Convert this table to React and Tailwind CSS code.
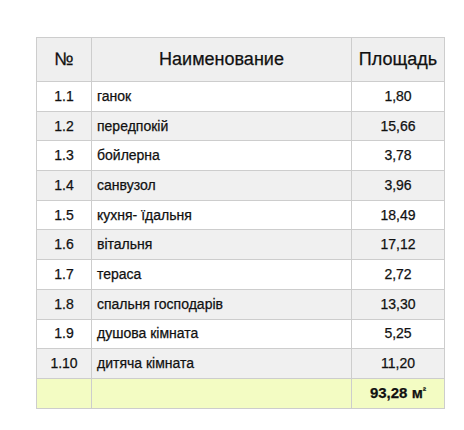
import React from 'react';

const rows = [
  ['1.1', 'ганок', '1,80'],
  ['1.2', 'передпокій', '15,66'],
  ['1.3', 'бойлерна', '3,78'],
  ['1.4', 'санвузол', '3,96'],
  ['1.5', 'кухня- їдальня', '18,49'],
  ['1.6', 'вітальня', '17,12'],
  ['1.7', 'тераса', '2,72'],
  ['1.8', 'спальня господарів', '13,30'],
  ['1.9', 'душова кімната', '5,25'],
  ['1.10', 'дитяча кімната', '11,20'],
];

const App = () => {
  return (
    <div className="w-[464px] h-[430px] bg-white pt-[37px] pl-[36px] font-['Liberation_Sans',Arial,sans-serif] text-[#111] [-webkit-text-stroke:0.25px_#111]">
      <table className="border-collapse w-[408px] table-fixed">
        <colgroup>
          <col className="w-[55px]" />
          <col className="w-[260px]" />
          <col className="w-[93px]" />
        </colgroup>
        <thead>
          <tr className="h-[44px] bg-[#efefef] text-[18px]">
            <th className="border border-[#cdcdcd] font-normal text-center">№</th>
            <th className="border border-[#cdcdcd] font-normal text-center">Наименование</th>
            <th className="border border-[#cdcdcd] font-normal text-center">Площадь</th>
          </tr>
        </thead>
        <tbody className="text-[14px]">
          {rows.map((r, i) => (
            <tr key={r[0]} className={`h-[29.7px] ${i % 2 ? 'bg-[#f0f0f0]' : 'bg-white'}`}>
              <td className="border border-[#cdcdcd] text-center">{r[0]}</td>
              <td className="border border-[#cdcdcd] pl-[5px]">{r[1]}</td>
              <td className="border border-[#cdcdcd] text-center">{r[2]}</td>
            </tr>
          ))}
          <tr className="h-[30px] bg-[#f3fcc3]">
            <td className="border border-[#cdcdcd]"></td>
            <td className="border border-[#cdcdcd]"></td>
            <td className="border border-[#cdcdcd] text-center font-bold text-[15px]">
              93,28 м<span className="text-[10px] align-[4px]">²</span>
            </td>
          </tr>
        </tbody>
      </table>
    </div>
  );
};

export default App;
